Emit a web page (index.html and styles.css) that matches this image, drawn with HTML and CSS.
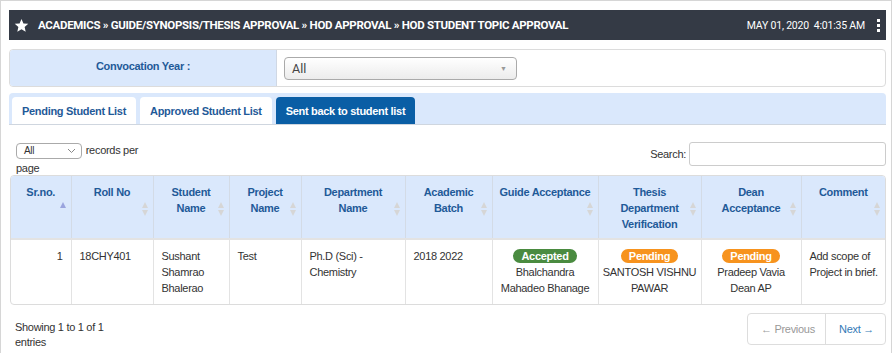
FILE: index.html
```html
<!DOCTYPE html>
<html lang="en">
<head>
    <meta charset="UTF-8">
    <title>HOD Student Topic Approval</title>
    <link rel="stylesheet" href="styles.css">
</head>
<body>
    <div class="page">
        <header class="top-bar">
            <div class="crumbs">
                <svg class="star" width="15" height="15" viewBox="0 0 24 24"><path d="M12 1.5l3.1 7.1 7.7.7-5.8 5.1 1.7 7.6L12 18l-6.7 4 1.7-7.6-5.8-5.1 7.7-.7z" fill="#fff"/></svg>
                <span>ACADEMICS &raquo; GUIDE/SYNOPSIS/THESIS APPROVAL &raquo; HOD APPROVAL &raquo; HOD STUDENT TOPIC APPROVAL</span>
            </div>
            <div class="clock">
                <span>MAY 01, 2020&nbsp;&nbsp;4:01:35 AM</span>
                <span class="kebab"><i></i><i></i><i></i></span>
            </div>
        </header>

        <div class="filter-panel">
            <div class="filter-label">Convocation Year :</div>
            <div class="filter-field">
                <div class="fake-select">
                    <span>All</span>
                    <span class="caret">&#9660;</span>
                </div>
            </div>
        </div>

        <nav class="tabs">
            <a class="tab">Pending Student List</a>
            <a class="tab">Approved Student List</a>
            <a class="tab active">Sent back to student list</a>
        </nav>

        <div class="dt-top">
            <div class="dt-length">
                <span class="mini-select"><span>All</span><svg width="9" height="6" viewBox="0 0 9 6"><path d="M1 1l3.5 3.5L8 1" fill="none" stroke="#888" stroke-width="1"/></svg></span>
                records per page
            </div>
            <div class="dt-search">
                <label>Search:</label>
                <span class="search-box"></span>
            </div>
        </div>

        <div class="table-wrap">
            <table class="data-table">
                <colgroup>
                    <col style="width:60px"><col style="width:82px"><col style="width:76px"><col style="width:72px"><col style="width:104px">
                    <col style="width:87px"><col style="width:106px"><col style="width:103px"><col style="width:100px"><col>
                </colgroup>
                <thead>
                    <tr>
                        <th>Sr.no.<span class="sort up"></span></th>
                        <th>Roll No<span class="sort"></span></th>
                        <th>Student Name<span class="sort"></span></th>
                        <th>Project Name<span class="sort"></span></th>
                        <th>Department Name<span class="sort"></span></th>
                        <th>Academic Batch<span class="sort"></span></th>
                        <th>Guide Acceptance<span class="sort"></span></th>
                        <th>Thesis Department Verification<span class="sort"></span></th>
                        <th>Dean<br>Acceptance<span class="sort"></span></th>
                        <th>Comment<span class="sort"></span></th>
                    </tr>
                </thead>
                <tbody>
                    <tr>
                        <td class="num">1</td>
                        <td>18CHY401</td>
                        <td>Sushant Shamrao Bhalerao</td>
                        <td>Test</td>
                        <td>Ph.D (Sci) - Chemistry</td>
                        <td>2018 2022</td>
                        <td class="center"><span class="badge green">Accepted</span><br>Bhalchandra Mahadeo Bhanage</td>
                        <td class="center"><span class="badge orange">Pending</span><br>SANTOSH VISHNU PAWAR</td>
                        <td class="center"><span class="badge orange">Pending</span><br>Pradeep Vavia Dean AP</td>
                        <td class="comment">Add scope of Project in brief.</td>
                    </tr>
                </tbody>
            </table>
        </div>

        <div class="dt-bottom">
            <div class="dt-info">Showing 1 to 1 of 1 entries</div>
            <div class="pager">
                <a class="prev">&larr; Previous</a>
                <a class="next">Next &rarr;</a>
            </div>
        </div>
    </div>
</body>
</html>
```

FILE: styles.css
```css
/* --- Base --- */
* {
    box-sizing: border-box;
}

body {
    margin: 0;
    font-family: 'Liberation Sans', Arial, sans-serif;
    font-size: 11px;
    letter-spacing: -0.3px;
    color: #333;
    background-color: #fff;
}

.page {
    width: 892px;
    height: 353px;
    border: 1px solid #d6d6d6;
    border-bottom: none;
    padding: 9px 5px 0 8px;
    overflow: hidden;
}

/* --- Dark breadcrumb bar --- */
.top-bar {
    height: 30px;
    background-color: #343a45;
    color: #fff;
    display: flex;
    align-items: center;
    justify-content: space-between;
    padding: 0 6px 0 5px;
}

.crumbs {
    display: flex;
    align-items: center;
    gap: 9px;
    font-family: 'Roboto', sans-serif;
    font-weight: 700;
    font-size: 11.5px;
    letter-spacing: -0.3px;
}

.clock {
    display: flex;
    align-items: center;
    gap: 12px;
    font-family: 'Roboto', sans-serif;
    font-size: 10.5px;
    letter-spacing: -0.2px;
}

.kebab {
    display: flex;
    flex-direction: column;
    gap: 2px;
}

.kebab i {
    display: block;
    width: 3px;
    height: 3px;
    background-color: #fff;
}

/* --- Convocation filter --- */
.filter-panel {
    margin-top: 9px;
    height: 38px;
    border: 1px solid #dcdcdc;
    border-radius: 4px;
    display: flex;
    overflow: hidden;
}

.filter-label {
    width: 267px;
    background-color: #dae8fc;
    border-right: 1px solid #d0d8e4;
    color: #1f5a98;
    font-weight: 700;
    text-align: center;
    padding-top: 10px;
}

.filter-field {
    flex: 1;
    padding: 7px 7px;
}

.fake-select {
    width: 233px;
    height: 23px;
    border: 1px solid #aaa;
    border-radius: 4px;
    background: linear-gradient(#fff, #ececec);
    display: flex;
    align-items: center;
    justify-content: space-between;
    padding: 0 9px 0 7px;
    font-family: 'Roboto', sans-serif;
    font-size: 12.5px;
    letter-spacing: 0;
    color: #444;
}

.fake-select .caret {
    font-size: 7px;
    color: #999;
}

/* --- Tabs --- */
.tabs {
    margin-top: 6px;
    height: 32px;
    background-color: #dae8fc;
    border-radius: 4px 4px 0 0;
    border-bottom: 1px solid #cfd6df;
    display: flex;
    align-items: flex-end;
    gap: 4px;
    padding: 4px 3px 0 3px;
}

.tab {
    height: 27px;
    background-color: #fff;
    border-radius: 4px 4px 0 0;
    padding: 0 10px;
    display: flex;
    align-items: center;
    color: #1f5a98;
    font-weight: 700;
}

.tab.active {
    background-color: #0a5ea5;
    color: #fff;
}

/* --- DataTable controls --- */
.dt-top {
    height: 50px;
    display: flex;
    justify-content: space-between;
    align-items: flex-start;
    padding: 17px 0 0 7px;
}

.dt-length {
    width: 130px;
    line-height: 18px;
    margin-top: -1px;
}

.mini-select {
    display: inline-flex;
    align-items: center;
    justify-content: space-between;
    width: 66px;
    height: 16px;
    margin-right: 1px;
    border: 1px solid #aaa;
    border-radius: 4px;
    padding: 0 5px 0 7px;
    vertical-align: middle;
    font-size: 10px;
    line-height: 12px;
    overflow: hidden;
}

.dt-search {
    display: flex;
    align-items: center;
    gap: 3px;
}

.search-box {
    width: 197px;
    height: 24px;
    border: 1px solid #ccc;
    border-radius: 3px;
}

/* --- Table --- */
.table-wrap {
    margin-left: 1px;
    border: 1px solid #dcdcdc;
    border-radius: 4px;
    overflow: hidden;
}

.data-table {
    width: 100%;
    border-collapse: collapse;
    table-layout: fixed;
}

.data-table th {
    position: relative;
    height: 63px;
    background-color: #dae8fc;
    color: #1f5a98;
    font-weight: 700;
    line-height: 16px;
    vertical-align: top;
    text-align: center;
    padding: 8px 7px 0 7px;
    border-left: 1px solid #d3dbe6;
    border-bottom: 2px solid #e3e3e3;
}

.data-table td {
    height: 62px;
    line-height: 16px;
    vertical-align: top;
    padding: 8px 8px;
    border-left: 1px solid #e3e3e3;
}

.data-table th:first-child,
.data-table td:first-child {
    border-left: none;
}

.data-table td.num {
    text-align: right;
}

.data-table td.center {
    text-align: center;
    padding: 8px 4px;
}

.data-table td.comment {
    padding-right: 2px;
}

/* sort arrows */
.sort {
    position: absolute;
    right: 4px;
    top: 26px;
    width: 7px;
    height: 14px;
}

.sort::before,
.sort::after {
    content: '';
    position: absolute;
    left: 0;
    border-left: 3.5px solid transparent;
    border-right: 3.5px solid transparent;
}

.sort::before {
    top: 0;
    border-bottom: 6px solid #d6d6d6;
}

.sort::after {
    bottom: 0;
    border-top: 6px solid #d6d6d6;
}

.sort.up::before {
    border-bottom-color: #9aa4de;
}

.sort.up::after {
    display: none;
}

.badge {
    display: inline-block;
    line-height: 14px;
    padding: 0 8px;
    border-radius: 8px;
    color: #fff;
    font-weight: 700;
}

.badge.green {
    background-color: #4a8b40;
}

.badge.orange {
    background-color: #f7931e;
}

/* --- Footer --- */
.dt-bottom {
    display: flex;
    justify-content: space-between;
    align-items: flex-start;
    padding: 8px 0 0 6px;
}

.dt-info {
    width: 110px;
    line-height: 15px;
    margin-top: 7px;
}

.pager {
    display: flex;
    height: 32px;
    border: 1px solid #ddd;
    border-radius: 4px;
    white-space: nowrap;
}

.pager a {
    display: flex;
    align-items: center;
    padding: 0 13px;
}

.pager .prev {
    width: 78px;
    color: #999;
    border-right: 1px solid #ddd;
}

.pager .next {
    width: 59px;
    color: #337ab7;
}
```
